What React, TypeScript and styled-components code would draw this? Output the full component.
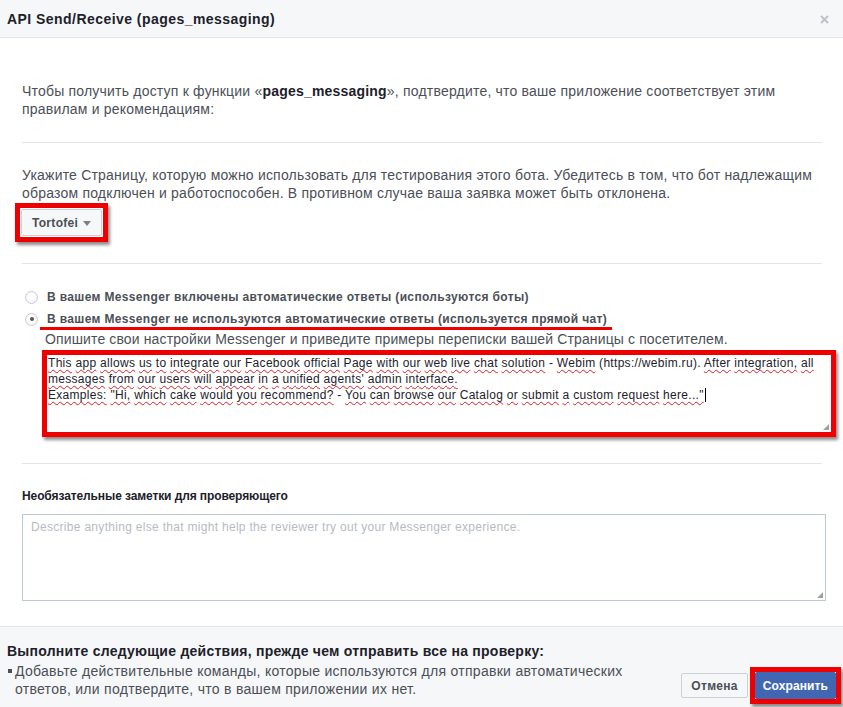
import styled, { createGlobalStyle } from "styled-components";

const GlobalStyle = createGlobalStyle`
  html, body {
    margin: 0;
    padding: 0;
    background: #ffffff;
  }
  body {
    font-family: "Liberation Sans", Arial, sans-serif;
    color: #4b4f56;
  }
`;

const introWords =
  "This app allows us to integrate our Facebook official Page with our web live chat solution - Webim (https://webim.ru). After integration, all messages from our users will appear in a unified agents' admin interface.";
const exampleWords =
  'Examples: "Hi, which cake would you recommend? - You can browse our Catalog or submit a custom request here..."';

// words the browser spell checker left alone
const correct = ["-", "(https://webim.ru)."];

function Spelled({ text }: { text: string }) {
  const words = text.split(" ");
  return (
    <>
      {words.map((w, i) => (
        <span key={i}>
          {correct.includes(w) ? w : <Misspelt>{w}</Misspelt>}
          {i < words.length - 1 ? " " : ""}
        </span>
      ))}
    </>
  );
}

export default function App() {
  return (
    <>
      <GlobalStyle />
      <Dialog>
        <Header>
          <Title>API Send/Receive (pages_messaging)</Title>
          <Close aria-label="Close">
            <svg width="9" height="9" viewBox="0 0 9 9">
              <path d="M1 1L8 8M8 1L1 8" stroke="#bec2c9" strokeWidth="2" />
            </svg>
          </Close>
        </Header>

        <Body>
          <Section $top={44} $bottom={24}>
            <Text>
              Чтобы получить доступ к функции «<b>pages_messaging</b>», подтвердите, что ваше
              приложение соответствует этим правилам и рекомендациям:
            </Text>
          </Section>

          <Section $top={23} $bottom={21}>
            <Text>
              Укажите Страницу, которую можно использовать для тестирования этого бота. Убедитесь в
              том, что бот надлежащим образом подключен и работоспособен. В противном случае ваша
              заявка может быть отклонена.
            </Text>
            <Highlight $mt={1} $ml={-7} $pad={1}>
              <GreyButton $wide>
                Tortofei
                <Caret />
              </GreyButton>
            </Highlight>
          </Section>

          <Section $top={22} $bottom={26}>
            <RadioRow>
              <Radio />
              <RadioLabel>В вашем Messenger включены автоматические ответы (используются боты)</RadioLabel>
            </RadioRow>
            <RadioRow>
              <Radio $checked />
              <RadioLabel $marked>
                В вашем Messenger не используются автоматические ответы (используется прямой чат)
              </RadioLabel>
            </RadioRow>
            <Described>
              Опишите свои настройки Messenger и приведите примеры переписки вашей Страницы с
              посетителем.
            </Described>
            <AnswerBox>
              <Spelled text={introWords} />
              <br />
              <Spelled text={exampleWords} />
              <Cursor />
              <Grip />
            </AnswerBox>
          </Section>

          <Section $top={24} $bottom={24}>
            <Label>Необязательные заметки для проверяющего</Label>
            <NotesBox>
              Describe anything else that might help the reviewer try out your Messenger experience.
              <Grip />
            </NotesBox>
          </Section>
        </Body>

        <Footer>
          <FooterText>
            <FooterTitle>Выполните следующие действия, прежде чем отправить все на проверку:</FooterTitle>
            <Bullet>
              Добавьте действительные команды, которые используются для отправки автоматических
              ответов, или подтвердите, что в вашем приложении их нет.
            </Bullet>
          </FooterText>
          <Actions>
            <GreyButton>Отмена</GreyButton>
            <Highlight $mt={0} $ml={0} $pad={0}>
              <BlueButton>Сохранить</BlueButton>
            </Highlight>
          </Actions>
        </Footer>
      </Dialog>
    </>
  );
}

const Dialog = styled.div`
  width: 843px;
  height: 707px;
  display: flex;
  flex-direction: column;
  background: #fff;
`;

const Header = styled.div`
  height: 37px;
  flex-shrink: 0;
  background: #f6f7f9;
  border-bottom: 1px solid #e5e5e5;
  display: flex;
  align-items: center;
  justify-content: space-between;
  padding: 0 14px 0 7px;
`;

const Title = styled.div`
  font-size: 14px;
  font-weight: bold;
  letter-spacing: 0.45px;
  color: #1d2129;
`;

const Close = styled.div`
  display: flex;
  align-items: center;
  padding-top: 1px;
`;

const Body = styled.div`
  flex: 1;
  padding: 0 21px 0 22px;
`;

const Section = styled.div<{ $top: number; $bottom: number }>`
  padding: ${(p) => p.$top}px 0 ${(p) => p.$bottom}px;
  & + & {
    border-top: 1px solid #e5e5e5;
  }
`;

const Text = styled.p`
  margin: 0;
  font-size: 14px;
  line-height: 18px;
  letter-spacing: 0.2px;
  color: #4b4f56;
  b {
    color: #1d2129;
  }
`;

const Highlight = styled.div<{ $mt: number; $ml: number; $pad: number }>`
  display: inline-flex;
  margin: ${(p) => p.$mt}px 0 0 ${(p) => p.$ml}px;
  border: 5px solid #ee0000;
  padding: ${(p) => p.$pad}px;
  box-shadow: 2px 3px 3px rgba(0, 0, 0, 0.45);
  background: #fff;
`;

const GreyButton = styled.button<{ $wide?: boolean }>`
  display: inline-flex;
  align-items: center;
  gap: 5px;
  height: ${(p) => (p.$wide ? 27 : 25)}px;
  padding: 0 ${(p) => (p.$wide ? 10 : 9)}px;
  background: #f6f7f9;
  border: 1px solid #ced0d4;
  border-radius: 2px;
  font-family: "Liberation Sans", Arial, sans-serif;
  font-size: 12px;
  font-weight: bold;
  letter-spacing: 0.3px;
  color: #4b4f56;
`;

const Caret = styled.span`
  width: 0;
  height: 0;
  border-left: 4px solid transparent;
  border-right: 4px solid transparent;
  border-top: 5px solid #7f7f7f;
  margin-top: 1px;
`;

const BlueButton = styled(GreyButton)`
  height: 27px;
  background: #4267b2;
  border-color: #4267b2;
  color: #fff;
  padding: 0 7px;
  letter-spacing: 0.1px;
`;

const RadioRow = styled.div`
  display: flex;
  align-items: center;
  gap: 9px;
  height: 22px;
  padding-left: 3px;
`;

const Radio = styled.span<{ $checked?: boolean }>`
  width: 11px;
  height: 11px;
  border-radius: 50%;
  border: 1px solid #c7ccd4;
  background: radial-gradient(circle at 50% 40%, #ffffff 30%, #eceef1 100%);
  display: flex;
  align-items: center;
  justify-content: center;
  &::after {
    content: "";
    width: 4px;
    height: 4px;
    border-radius: 50%;
    background: ${(p) => (p.$checked ? "#555" : "transparent")};
  }
`;

const RadioLabel = styled.span<{ $marked?: boolean }>`
  position: relative;
  font-size: 12px;
  font-weight: bold;
  letter-spacing: 0.35px;
  color: #4b4f56;
  &::after {
    content: "";
    display: ${(p) => (p.$marked ? "block" : "none")};
    position: absolute;
    left: -7px;
    right: -5px;
    bottom: -4px;
    height: 3px;
    background: #ee0000;
  }
`;

const Described = styled.div`
  font-size: 14px;
  line-height: 18px;
  letter-spacing: 0.13px;
  padding-left: 23px;
  color: #4b4f56;
`;

const AnswerBox = styled.div`
  position: relative;
  margin: 2px -14px 0 20px;
  height: 77px;
  border: 5px solid #ee0000;
  box-shadow: 2px 3px 3px rgba(0, 0, 0, 0.45);
  padding: 0 0 0 1px;
  font-family: "Liberation Sans", Tahoma, sans-serif;
  font-size: 12px;
  line-height: 16px;
  color: #1d2129;
  letter-spacing: 0.3px;
`;

const Misspelt = styled.span`
  text-decoration: underline wavy #e02020;
  text-decoration-thickness: 1px;
  text-underline-offset: 2px;
`;

const Cursor = styled.span`
  display: inline-block;
  width: 1px;
  height: 14px;
  margin-left: 1px;
  vertical-align: -3px;
  background: #000;
`;

const Grip = styled.span`
  position: absolute;
  right: 2px;
  bottom: 2px;
  width: 6px;
  height: 6px;
  background: radial-gradient(circle, #9a9a9a 0.7px, transparent 0.8px) 0 0 / 2px 2px;
  clip-path: polygon(100% 0, 100% 100%, 0 100%);
`;

const Label = styled.div`
  font-size: 12px;
  font-weight: bold;
  letter-spacing: -0.1px;
  color: #1d2129;
  line-height: 16px;
`;

const NotesBox = styled.div`
  position: relative;
  margin: 10px -4px 0 0;
  height: 77px;
  border: 1px solid #bdc7d8;
  padding: 4px 3px 4px 8px;
  font-size: 12px;
  line-height: 16px;
  letter-spacing: 0.3px;
  color: #b7bbc2;
`;

const Footer = styled.div`
  height: 81px;
  flex-shrink: 0;
  box-sizing: border-box;
  background: #f6f7f9;
  border-top: 1px solid #e5e5e5;
  display: flex;
  justify-content: space-between;
  align-items: flex-end;
  padding: 0 2px 3px 7px;
`;

const FooterText = styled.div`
  align-self: flex-start;
  padding-top: 15px;
`;

const FooterTitle = styled.div`
  font-size: 14px;
  font-weight: bold;
  letter-spacing: 0.25px;
  color: #1d2129;
  line-height: 18px;
`;

const Bullet = styled.div`
  position: relative;
  width: 640px;
  padding-left: 8px;
  margin-top: 2px;
  font-size: 14px;
  line-height: 18px;
  letter-spacing: 0.28px;
  color: #4b4f56;
  &::before {
    content: "";
    position: absolute;
    left: 1px;
    top: 7px;
    width: 4px;
    height: 4px;
    background: #4b4f56;
  }
`;

const Actions = styled.div`
  display: flex;
  align-items: center;
  & > button {
    margin-right: 2px;
  }
`;
